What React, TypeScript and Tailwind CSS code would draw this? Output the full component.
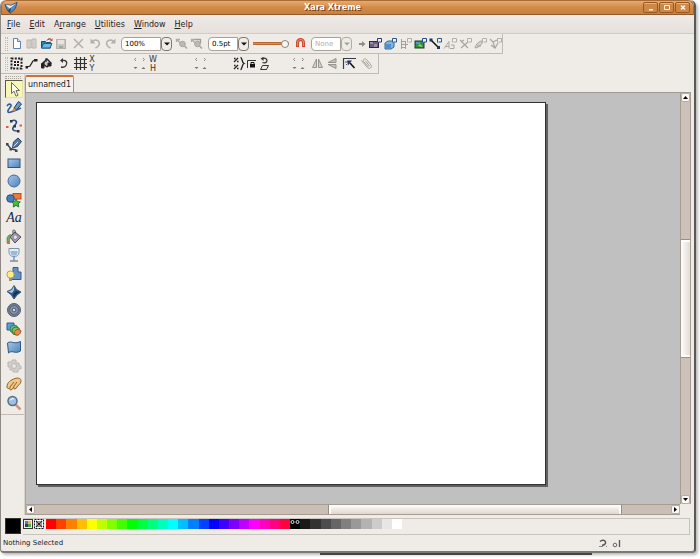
import { useState, type ReactNode } from 'react'
import clsx from 'clsx'

const menus = [
  { key: 'F', before: '', after: 'ile' },
  { key: 'E', before: '', after: 'dit' },
  { key: 'r', before: 'A', after: 'range' },
  { key: 'U', before: '', after: 'tilities' },
  { key: 'W', before: '', after: 'indow' },
  { key: 'H', before: '', after: 'elp' },
]

const swatches = [
  '#ff0000', '#ff4000', '#ff8000', '#ffbf00', '#ffff00', '#bfff00', '#80ff00', '#40ff00',
  '#00ff00', '#00ff40', '#00ff80', '#00ffbf', '#00ffff', '#00bfff', '#0080ff', '#0040ff',
  '#0000ff', '#4000ff', '#8000ff', '#bf00ff', '#ff00ff', '#ff00bf', '#ff0080', '#ff0040',
  '#000000', '#1a1a1a', '#333333', '#4d4d4d', '#666666', '#808080', '#999999', '#b3b3b3',
  '#cccccc', '#e6e6e6', '#ffffff',
]

function Svg({ children, className = 'size-[15px]', box = 15 }: { children: ReactNode; className?: string; box?: number }) {
  return (
    <svg viewBox={`0 0 ${box} ${box}`} className={clsx('shrink-0', className)} fill="none" aria-hidden="true">
      {children}
    </svg>
  )
}

function IconButton({ label, children, className = 'w-[15px]' }: { label: string; children: ReactNode; className?: string }) {
  return (
    <button type="button" aria-label={label} className={clsx('flex h-[15px] shrink-0 items-center justify-center', className)}>
      {children}
    </button>
  )
}

function Grip() {
  return <div className="ml-1 mr-px h-3.5 w-[3px] shrink-0 border-x border-dotted border-[#bdb7af]" />
}

interface ComboProps {
  label: string
  value: string
  width: string
  disabled?: boolean
}

function Combo({ label, value, width, disabled = false }: ComboProps) {
  const [text, setText] = useState(value)
  return (
    <div className={clsx('flex h-3.5 shrink-0', width)}>
      <input
        aria-label={label}
        value={text}
        disabled={disabled}
        onChange={(e) => setText(e.target.value)}
        className={clsx(
          'w-0 min-w-0 flex-1 rounded-l-sm border border-[#a8a199] bg-white px-[3px] text-[7px] leading-3 outline-none',
          disabled ? 'text-[#b5b0aa]' : 'text-black',
        )}
      />
      <button
        type="button"
        disabled={disabled}
        aria-label={`${label} options`}
        className={clsx(
          'flex w-[11px] items-center justify-center rounded-sm border bg-[#efebe6]',
          disabled ? 'border-[#b0aaa3]' : 'border-[#7d776f]',
        )}
      >
        <svg viewBox="0 0 6 4" className="h-1 w-1.5" aria-hidden="true">
          <path d="M0 0.5h6L3 3.5z" fill={disabled ? '#a7a19b' : '#111'} />
        </svg>
      </button>
    </div>
  )
}

// four small nudge arrows next to a numeric field
function Nudge() {
  return (
    <Svg>
      <path d="M4 2L2.500 3.500L4 5M11 2l1.500 1.500L11 5" stroke="#8d8882" />
      <path d="M1.500 11h4l-2 2zM9.500 13h4l-2-2z" fill="#77726c" />
    </Svg>
  )
}

function NewIcon() {
  return (
    <Svg>
      <path d="M4.5 2.5h4l3 3v7h-7z" fill="#fff" stroke="#5f83ab" />
      <path d="M8.5 2.5v3h3" stroke="#5f83ab" fill="#d8e6f5" />
    </Svg>
  )
}

function TemplateIcon() {
  return (
    <Svg>
      <path d="M3 4h4v8H3zM8 3h4v9H8z" fill="#dedad5" stroke="#b8b3ad" />
      <path d="M5 4v8M10 3v9" stroke="#c5c0ba" />
    </Svg>
  )
}

function OpenIcon() {
  return (
    <Svg>
      <path d="M2.5 12V5.5h4l1 1h4V12z" fill="#2f83b8" stroke="#17506f" />
      <path d="M2.5 12l2-4.500h8.500L11 12z" fill="#6db9e4" stroke="#1c5f88" />
      <path d="M8 4.500c1-2 3-2 4-1" stroke="#333" />
      <path d="M10.500 5.500L13.500 5V2z" fill="#e04a28" />
    </Svg>
  )
}

function SaveIcon() {
  return (
    <Svg>
      <rect x="2.500" y="3.500" width="9" height="9" fill="#c9c5c0" stroke="#b5b0aa" />
      <path d="M4 4h6v4H4z" fill="#e7e4e0" />
      <path d="M5 10h4v2H5z" fill="#aaa59f" />
    </Svg>
  )
}

function UndoIcon({ flip = false }: { flip?: boolean }) {
  return (
    <Svg className={clsx('size-[15px]', flip && '-scale-x-100')}>
      <path d="M4 6c3-4 9-1 7 3-.7 1.500-2 2.500-3.500 3" stroke="#b3afa9" strokeWidth="1.600" />
      <path d="M2.500 2.500v5h5z" fill="#b3afa9" />
    </Svg>
  )
}

function PinIcon({ variant = 0 }: { variant?: number }) {
  return (
    <Svg>
      <path d="M2.500 6V3.500H6M2.500 3.500l4 3.500" stroke="#b0aba5" strokeWidth="1.300" />
      <circle cx="8.500" cy="8" r="2.800" fill="#bdb8b2" stroke="#aaa59f" />
      <path d="M10.500 10l2.500 2.500" stroke="#aaa59f" strokeWidth="1.600" />
      {variant === 1 && <path d="M6 3.500h5.500V7" stroke="#a09b95" strokeWidth="1.300" />}
    </Svg>
  )
}

function MagnetIcon() {
  return (
    <Svg>
      <path d="M4.500 12V6.500a3 3 0 0 1 6 0V12" stroke="#c9492d" strokeWidth="3" />
      <path d="M4.500 10V6.500a3 3 0 0 1 6 0V10" stroke="#ec8369" strokeWidth="1.200" />
      <path d="M3 11h3v1.500H3zM9 11h3v1.500H9z" fill="#e9e5e0" />
    </Svg>
  )
}

// flag in the corner of every gallery button
function Flag({ color }: { color: string }) {
  return <path d="M9.500 6.500V2.500h4v3.500h-3" fill="#f3f1ee" stroke={color} />
}

const galleries: { label: string; color: string; art: ReactNode }[] = [
  { label: 'Bitmap gallery', color: '#2d3c66', art: <><rect x="1.500" y="5.500" width="9" height="6" fill="#66618a" stroke="#262b4d" /><path d="M2 6h3v2H2zM6 8h3v3H6z" fill="#a58da5" /></> },
  { label: 'Layer gallery', color: '#2b5688', art: <><path d="M2 7l3-2h6v6l-3 2H2z" fill="#7fb5e2" stroke="#34679e" /><path d="M3 8h5v4H3z" fill="#4f8fcb" /></> },
  { label: 'Line gallery', color: '#b2ada7', art: <path d="M3.500 3v10M7.500 5v8M3 5.500h5M3 8.500h7M3 11.500h5" stroke="#a39e98" /> },
  { label: 'Fill gallery', color: '#244a86', art: <><rect x="2" y="5" width="9" height="7" fill="#2e9147" stroke="#1b3f35" /><path d="M3 6h4v2H3z" fill="#5796d6" /><path d="M5 10l2-2 3 3z" fill="#a8d54f" /></> },
  { label: 'Name gallery', color: '#2b5688', art: <><path d="M3 4l7 7" stroke="#111" strokeWidth="1.500" /><path d="M1.500 2.500h3v3h-3zM9 10h3v3H9z" fill="#17396a" /></> },
  { label: 'Font gallery', color: '#b2ada7', art: <path d="M1 12.500l5-7v7M2.500 10.500H6M7 12.500h4V9H8" stroke="#aaa59f" /> },
  { label: 'Clipart gallery', color: '#b2ada7', art: <path d="M2 4l8 8M10 6l-7 6M3 6l3-2" stroke="#aaa59f" strokeWidth="1.200" /> },
  { label: 'Colour gallery', color: '#b2ada7', art: <path d="M2 12c1-4 4-7 7-7 1 3-2 6-7 7zM4 10h4" fill="#d2cec9" stroke="#aaa59f" /> },
  { label: 'Frame gallery', color: '#b2ada7', art: <path d="M2 3l3 3 4-2M5 6l2 6 3-5M3 9l4 3" stroke="#aaa59f" strokeWidth="1.200" /> },
]

const tools: { label: string; art: ReactNode }[] = [
  { label: 'Selector', art: <path d="M5.500 1.500v11l2.500-2.300 2 5 2-1-2-4.700h3.500z" fill="#fffef0" stroke="#6a6a63" /> },
  {
    label: 'Freehand',
    art: (
      <>
        <path d="M1 6c2-3 6-2 3 1.500s-3 6 1 4.500 6-2 10-4" stroke="#2f5d91" strokeWidth="1.600" />
        <path d="M8 8l4.500-6.500L15.500 4 10.500 10z" fill="#6d9bcd" stroke="#203b60" />
        <path d="M6.500 12L8 8l2.500 2z" fill="#e8a048" stroke="#7a5526" strokeWidth="0.500" />
      </>
    ),
  },
  {
    label: 'Shape editor',
    art: (
      <>
        <path d="M5 3c5-2 7 1 4 4s-4 6 3 6" stroke="#2c4f80" strokeWidth="1.600" />
        <path d="M4 2h2.500v2.500H4zM7.500 7H10v2.500H7.500zM11 12h2.500v2.500H11z" fill="#26364f" />
        <path d="M0 8h2.500v2H0zM13.500 6.500H16v2h-2.500z" fill="#df5c49" />
      </>
    ),
  },
  {
    label: 'Pen',
    art: (
      <>
        <path d="M1 7l4 5 5 1" stroke="#333d4c" strokeWidth="1.300" />
        <path d="M0 6h2.500v2.500H0zM3.500 11H6v2.500H3.500zM9 12.500h2.500V15H9z" fill="#37465b" />
        <path d="M6.500 11l1-6 4.500-4 3.500 3.500-4 5z" fill="#5779a2" stroke="#2d4362" />
        <path d="M7.500 9.500L12 5" stroke="#d4e2f1" />
      </>
    ),
  },
  { label: 'Rectangle', art: <rect x="2" y="4" width="12" height="8.500" fill="url(#toolBlue)" stroke="#30567f" /> },
  { label: 'Ellipse', art: <circle cx="8" cy="8" r="6" fill="url(#toolBlue)" stroke="#426b96" /> },
  {
    label: 'QuickShape',
    art: (
      <>
        <rect x="7" y="1.500" width="8" height="5.500" fill="#ee7a3c" stroke="#bb4d19" />
        <circle cx="4.500" cy="6.500" r="3.800" fill="#447db9" stroke="#224f80" />
        <path d="M10 7l1.300 2.600 3 .3-2.200 2 .7 3-2.800-1.500L7.200 15l.6-3.100-2.200-2 3-.3z" fill="#4dbd49" stroke="#25782c" />
      </>
    ),
  },
  { label: 'Text', art: null },
  {
    label: 'Fill',
    art: (
      <>
        <path d="M4 8l5-5 6 5-6 6z" fill="#a29bb1" stroke="#514b5e" />
        <path d="M7 8l2-2.500L12 8l-3 3z" fill="#e5e1eb" stroke="#6a6377" strokeWidth="0.600" />
        <path d="M7 5V1.500c1-1.500 3 0 2 3" stroke="#484852" />
        <path d="M1 9c1-3 3-4 5-3-3 2-2 5-3 8H1z" fill="#6fae59" stroke="#4c6d48" strokeWidth="0.600" />
        <path d="M1 12h3v3H1z" fill="#e6624b" />
      </>
    ),
  },
  {
    label: 'Transparency',
    art: (
      <>
        <path d="M3 1.500h10c.5 6-1 8-5 8s-5.500-2-5-8z" fill="#e4edf6" stroke="#7793b0" />
        <path d="M4.500 4h7c.3 3-1 4.500-3.500 4.500S4.200 7 4.500 4z" fill="#9bb9d6" />
        <path d="M8 9.500v4" stroke="#7793b0" strokeWidth="1.500" />
        <path d="M4 14h8" stroke="#7793b0" strokeWidth="1.600" />
      </>
    ),
  },
  {
    label: 'Shadow',
    art: (
      <>
        <path d="M7 1.500h5V6h3v7.500H5V6h2z" fill="#6592c1" stroke="#345d8a" />
        <circle cx="4.500" cy="8.500" r="3.600" fill="#ffec8e" stroke="#c79e36" />
        <path d="M3 12h3v3H3z" fill="#a79063" />
      </>
    ),
  },
  {
    label: 'Bevel',
    art: (
      <>
        <path d="M8 1.500l2.500 4L15 8l-4 3-3 4-3-4.500L1 7.500l4.500-2z" fill="#325d8b" stroke="#3b5573" />
        <path d="M8 2v4L6 9 2 7.500l4-1.500z" fill="#a9ccec" />
        <path d="M8 14l-1-4 3-3 4 1-4 2.500z" fill="#173354" />
      </>
    ),
  },
  {
    label: 'Contour',
    art: (
      <>
        <circle cx="8" cy="8" r="6.500" fill="#6d7c90" stroke="#57606d" />
        <circle cx="8" cy="8" r="4.300" fill="#8798ae" stroke="#56657b" />
        <circle cx="8" cy="8" r="1.900" fill="#cedaea" stroke="#46566c" />
      </>
    ),
  },
  {
    label: 'Blend',
    art: (
      <>
        <path d="M1 2h7v7H1z" fill="#5a9dd6" stroke="#275e95" />
        <circle cx="8" cy="8" r="4" fill="#5cb99c" stroke="#2f7d64" />
        <circle cx="10" cy="10" r="4" fill="#80c253" stroke="#3e7d25" />
        <path d="M8 12c1-4 5-5 7-2-1 4-4 6-7 2z" fill="#e98750" stroke="#a64b23" />
      </>
    ),
  },
  {
    label: 'Mould',
    art: <path d="M1.500 4c4-3 6 2 13-1.500v9.500C9 15.500 6 10.500 2.500 14z" fill="url(#toolBlue)" stroke="#2d5785" />,
  },
  {
    label: 'Live effects',
    art: (
      <>
        <path d="M2 4h4v-2h4v3h3v3h2v3h-3v3H7v-2H4V9H2z" fill="#d2cfcb" stroke="#bbb7b2" />
        <circle cx="8" cy="8" r="2.500" fill="#e5e2df" stroke="#bbb7b2" />
      </>
    ),
  },
  {
    label: 'Push',
    art: (
      <>
        <path d="M1 11c0-5 4-7 8-8.500 3-1 6 0 6 2s-1 4-3 5l-2 3c-2 1-3 0-2-2l-2 3c-2 1-3 0-2-2l-1 1c-1 0-2 0-2-1.500z" fill="#edc88a" stroke="#906327" />
        <path d="M4 11l4-5M8 10l3-4" stroke="#906327" />
      </>
    ),
  },
  {
    label: 'Zoom',
    art: (
      <>
        <path d="M9.500 9.500l5 5" stroke="#cf9581" strokeWidth="2.500" />
        <circle cx="6.500" cy="6" r="4.500" fill="#9dbfe2" stroke="#576d87" strokeWidth="1.500" />
        <path d="M4 5.500c1-2 3-2 4-1.500" stroke="#fff" />
      </>
    ),
  },
]

function TitleBar() {
  const control = 'flex h-[11px] w-[15px] items-center justify-center rounded-xs border border-[#98581f] bg-[#cf8747] shadow-[inset_0_1px_0_#e6b27e]'
  return (
    <header className="flex h-[15px] shrink-0 items-center rounded-t-md border border-[#a96c35] border-b-[#945a2a] bg-linear-to-b from-[#e6ab70] via-[#d28a49] to-[#c8803f] px-0.5">
      <Svg className="size-3.5" box={16}>
        <path d="M1 4l7 1 7-3.500-2 7L7 14l-3-3z" fill="#5b8cbb" stroke="#284d75" />
        <path d="M1.500 4l5 4.500L14 2.500 8 5.500z" fill="#e7f2fc" />
        <path d="M4.500 10.500L8 8l-1 5z" fill="#1f3e61" />
      </Svg>
      <h1 className="flex-1 pl-1 text-center text-[8px] leading-3 font-bold text-white [text-shadow:1px_1px_0_#754017]">Xara Xtreme</h1>
      <div className="mr-px flex gap-px">
        <button type="button" aria-label="Minimise" className={control}>
          <svg viewBox="0 0 8 7" className="h-[7px] w-2"><path d="M2 5h4v1.500H2z" fill="#fff3e2" /></svg>
        </button>
        <button type="button" aria-label="Maximise" className={control}>
          <svg viewBox="0 0 8 7" className="h-[7px] w-2"><path d="M1.500 1.500h5v4h-5z" fill="none" stroke="#fff3e2" /></svg>
        </button>
        <button type="button" aria-label="Close" className={control}>
          <svg viewBox="0 0 8 7" className="h-[7px] w-2"><path d="M2 1.500l4 4M6 1.500l-4 4" stroke="#fff3e2" strokeWidth="1.500" /></svg>
        </button>
      </div>
    </header>
  )
}

function MainToolbar() {
  const [quality, setQuality] = useState(100)
  return (
    <div className="flex h-5 w-[502px] items-center border-r border-b border-[#c1bbb3]">
      <Grip />
      <IconButton label="New"><NewIcon /></IconButton>
      <IconButton label="Templates"><TemplateIcon /></IconButton>
      <IconButton label="Open"><OpenIcon /></IconButton>
      <IconButton label="Save"><SaveIcon /></IconButton>
      <IconButton label="Delete" className="mx-0.5 w-[15px]">
        <Svg><path d="M3 3l9 9M12 3l-9 9" stroke="#b3afa9" strokeWidth="1.500" /></Svg>
      </IconButton>
      <IconButton label="Undo"><UndoIcon /></IconButton>
      <IconButton label="Redo" className="mr-[3px] w-[15px]"><UndoIcon flip /></IconButton>
      <Combo label="Zoom" value="100%" width="w-[51px]" />
      <IconButton label="Previous zoom" className="ml-0.5 w-[15px]"><PinIcon /></IconButton>
      <IconButton label="Zoom to drawing" className="mr-1 w-[15px]"><PinIcon variant={1} /></IconButton>
      <Combo label="Line width" value="0.5pt" width="w-[41px]" />
      <input
        aria-label="Quality"
        type="range"
        value={quality}
        onChange={(e) => setQuality(Number(e.target.value))}
        className="ml-1 h-[3px] w-9 shrink-0 appearance-none border-y border-[#b8692f] bg-[#e38a4c] [&::-webkit-slider-thumb]:size-2 [&::-webkit-slider-thumb]:appearance-none [&::-webkit-slider-thumb]:rounded-full [&::-webkit-slider-thumb]:border [&::-webkit-slider-thumb]:border-[#8d857d] [&::-webkit-slider-thumb]:bg-[#f8f6f3]"
      />
      <IconButton label="Snap to objects" className="mr-[3px] ml-1 w-[15px]"><MagnetIcon /></IconButton>
      <Combo label="Feather" value="None" width="w-[41px]" disabled />
      <IconButton label="Show galleries" className="ml-1 w-3">
        <svg viewBox="0 0 8 8" className="size-2"><path d="M1 3h3V1l3.500 3L4 7V5H1z" fill="#918c86" /></svg>
      </IconButton>
      <div className="flex w-[132px]">
        {galleries.map((g) => (
          <IconButton key={g.label} label={g.label} className="flex-1">
            <Svg>
              {g.art}
              <Flag color={g.color} />
            </Svg>
          </IconButton>
        ))}
      </div>
    </div>
  )
}

function FieldPair({ top, bottom }: { top: string; bottom: string }) {
  return (
    <div className="flex w-2 shrink-0 flex-col items-center text-[8px] leading-[9px] text-[#333]">
      <span>{top}</span>
      <span>{bottom}</span>
    </div>
  )
}

function InfoBar() {
  return (
    <div className="flex h-5 w-[378px] items-center border-r border-b border-[#c1bbb3]">
      <Grip />
      <IconButton label="Show bounds">
        <Svg>
          <rect x="2.500" y="2.500" width="10" height="10" stroke="#222" strokeWidth="2" strokeDasharray="2 1.300" />
          <path d="M5 5h2v2H5zM8 5h2v2H8zM5 8h2v2H5zM8 8h2v2H8z" fill="#222" />
        </Svg>
      </IconButton>
      <IconButton label="Scale line widths">
        <Svg>
          <path d="M3 11l3-1 3-5 3-1" stroke="#222" strokeWidth="1.300" />
          <path d="M1.500 10H4v2.500H1.500zM10 3h3.500v2.500H10z" fill="#222" />
        </Svg>
      </IconButton>
      <IconButton label="Transform fills">
        <Svg>
          <path d="M5 6l3-3 4 4-4 4-4-3z" fill="#c9c5c0" stroke="#222" strokeWidth="1.300" />
          <path d="M2.500 7.500L5 6v6H2.500zM7 2v4M9 7h3v3H9z" fill="#222" stroke="#222" />
        </Svg>
      </IconButton>
      <IconButton label="Rotate mode" className="mx-0.5 w-[15px]">
        <Svg>
          <path d="M6 4.500c4-1 6 2 4 5-1 2-3 2-5 1.500" stroke="#333" strokeWidth="1.300" />
          <path d="M4 4.500L7 2v5z" fill="#333" />
        </Svg>
      </IconButton>
      <IconButton label="Grid origin">
        <Svg><path d="M3.500 1v13M7.500 1v13M11.500 1v13M1 3.500h13M1 7.500h13M1 11.500h13" stroke="#333" strokeWidth="1.200" /></Svg>
      </IconButton>
      <FieldPair top="X" bottom="Y" />
      <div className="mr-0.5 ml-9"><Nudge /></div>
      <FieldPair top="W" bottom="H" />
      <div className="mr-6 ml-9"><Nudge /></div>
      <IconButton label="Lock aspect ratio">
        <Svg>
          <path d="M2 6l4-4M2 13l4-4M2 2.500h1.500M5 5.500h1.500M2 9.500h1.500M5 12.500h1.500" stroke="#222" strokeWidth="1.300" />
          <path d="M8.500 1.500c2 0 1 5 3.500 6-2.500 1-1.500 6-3.500 6" stroke="#222" strokeWidth="1.300" />
        </Svg>
      </IconButton>
      <IconButton label="Lock" className="w-2.5">
        <Svg className="size-3" box={12}>
          <path d="M1.500 10V2.500H10" stroke="#333" />
          <path d="M4 6h5v3.500H4z" fill="#111" />
          <path d="M5 6V4.500h3V6" stroke="#111" />
        </Svg>
      </IconButton>
      <IconButton label="Angle and shear">
        <Svg>
          <path d="M5 2.500c4-1 6 1 4.500 3.500-1 1-2.500 1-4 .5" stroke="#333" strokeWidth="1.300" />
          <path d="M3.500 2.500L6.500 1v4z" fill="#333" />
          <path d="M5.500 9.500h6l-2 4h-6z" stroke="#333" />
        </Svg>
      </IconButton>
      <div className="mr-1 ml-[19px]"><Nudge /></div>
      <IconButton label="Flip horizontally">
        <Svg><path d="M6.500 3v8.500h-4zM8.500 3v8.500h4z" fill="#d3cfca" stroke="#99948e" /></Svg>
      </IconButton>
      <IconButton label="Flip vertically">
        <Svg><path d="M11 2.500v4H3zM11 12.500v-4H3z" fill="#c5c0ba" stroke="#99948e" /></Svg>
      </IconButton>
      <IconButton label="Edit group contents" className="mx-0.5 w-[15px]">
        <Svg>
          <path d="M1.500 13V2.500H14" stroke="#333b4a" strokeWidth="1.200" />
          <path d="M8 7l4.500 5" stroke="#111" strokeWidth="1.600" />
          <path d="M5 4.500h5L6 9.500z" fill="#26355b" />
          <path d="M3 6h2M4 9l1-1" stroke="#44506a" />
        </Svg>
      </IconButton>
      <IconButton label="Clip">
        <Svg>
          <path d="M2.500 4.500l6 7c2 2 5 0 3.500-2.500L7.500 3.500c-1.500-1.500-4 0-3 2l5 5.500M6.500 5l4 5" stroke="#a5a09a" />
        </Svg>
      </IconButton>
    </div>
  )
}

function Toolbox() {
  const [active, setActive] = useState('Selector')
  return (
    <aside className="w-6 shrink-0 border-r border-[#d6d1ca]">
      <div className="border-b border-[#c1bbb3] pt-0.5 pb-0.5 pl-1">
        <div className="h-[3px] w-4 border-y border-dotted border-[#a9a39b]" />
        <div className="mt-px flex h-[332px] w-[18px] flex-col">
          {tools.map((tool) => (
            <button
              key={tool.label}
              type="button"
              aria-label={tool.label}
              aria-pressed={active === tool.label}
              onClick={() => setActive(tool.label)}
              className={clsx(
                'flex w-full flex-1 items-center justify-center border',
                active === tool.label
                  ? 'border-[#e4e0a8] border-t-[#5e5c48] border-l-[#5e5c48] bg-[#f8f6b4]'
                  : 'border-transparent',
              )}
            >
              {tool.art ? (
                <Svg className="size-4" box={16}>{tool.art}</Svg>
              ) : (
                <span className="font-['Liberation_Serif',serif] text-[14px] leading-4 text-[#16263d] italic">Aa</span>
              )}
            </button>
          ))}
        </div>
      </div>
    </aside>
  )
}

function ScrollButton({ label, path }: { label: string; path: string }) {
  return (
    <button
      type="button"
      aria-label={label}
      className="flex size-[9px] shrink-0 items-center justify-center rounded-xs border border-[#b5aca3] bg-[#faf8f6]"
    >
      <svg viewBox="0 0 5 5" className="size-[5px]"><path d={path} fill="#000" /></svg>
    </button>
  )
}

function Workspace() {
  return (
    <main className="grid min-h-0 flex-1 grid-cols-[1fr_11px] grid-rows-[1fr_11px] border-t border-l border-[#aaa59f] border-t-[#9d9994]">
      <div className="min-h-0 overflow-hidden bg-[#c0c0c0] pt-[9px] pl-2.5">
        <div className="h-[383px] w-[510px] border border-[#333] bg-white shadow-[2px_2px_0_#606060]" />
      </div>

      <div className="flex flex-col items-center border-x border-[#a79c92] bg-[#cdc2b9]">
        <ScrollButton label="Scroll up" path="M0 4h5L2.500 1z" />
        <div className="flex-[138]" />
        <div className="w-full flex-[118] border-y border-[#998f86] bg-linear-to-r from-white via-[#f0ece8] to-[#e3dcd5] shadow-[inset_0_2px_0_#fff,inset_0_-2px_0_#fff]" />
        <div className="flex-[138]" />
        <ScrollButton label="Scroll down" path="M0 1h5L2.500 4z" />
      </div>

      <div className="flex items-center border-y border-[#a79c92] bg-[#cabfb4]">
        <ScrollButton label="Scroll left" path="M4 0v5L1 2.500z" />
        <div className="flex-[294]" />
        <div className="h-full flex-[294] border-x border-[#998f86] bg-linear-to-b from-white via-[#eee9e3] to-[#dfd7cf] shadow-[inset_2px_0_0_#fff,inset_-2px_0_0_#fff]" />
        <div className="flex-[49]" />
        <ScrollButton label="Scroll right" path="M1 0v5l3-2.500z" />
      </div>
      <div className="bg-[#efebe7]" />
    </main>
  )
}

function ColourLine() {
  return (
    <div className="flex h-5 shrink-0 pt-[3px] pr-1">
      <div className="ml-1 size-4 shrink-0 border border-[#333] bg-black" />
      <div className="ml-0.5 flex flex-1 border-t border-r border-b border-[#c8c3bc]">
        <button type="button" aria-label="Edit colour" className="h-2.5 w-2.5">
          <Svg className="size-2.5" box={10}>
            <rect x="0.500" y="0.500" width="9" height="9" fill="#eee" stroke="#333" />
            <path d="M2 2h3v3H2z" fill="#3f83ce" />
            <path d="M5 2h3v3H5z" fill="#e3bd47" />
            <path d="M2 5h3v3H2z" fill="#2b3c60" />
            <path d="M5 5h3v3H5z" fill="#51a953" />
          </Svg>
        </button>
        <button type="button" aria-label="No colour" className="mr-0.5 ml-px h-2.5 w-2.5">
          <Svg className="size-2.5" box={10}>
            <rect x="0.500" y="0.500" width="9" height="9" fill="#fff" stroke="#111" strokeDasharray="2 1" />
            <path d="M2 2l6 6M8 2L2 8" stroke="#222" strokeWidth="1.200" />
            <circle cx="5" cy="5" r="2.500" stroke="#555" strokeWidth="0.800" />
          </Svg>
        </button>
        <div className="flex h-2.5 w-[356px]">
          {swatches.map((color) => (
            <button
              key={color}
              type="button"
              aria-label={color}
              className="flex flex-1 justify-center"
              style={{ backgroundColor: color }}
            >
              {/* line and fill marker of the current colour */}
              {color === '#000000' && (
                <svg viewBox="0 0 10 6" className="h-1.5 w-2.5" fill="none">
                  <circle cx="2.500" cy="3" r="1.500" stroke="#dde8e4" />
                  <circle cx="7.500" cy="3" r="1.500" stroke="#dde8e4" />
                </svg>
              )}
            </button>
          ))}
        </div>
      </div>
    </div>
  )
}

function StatusBar() {
  return (
    <footer className="flex h-4 shrink-0 items-center pr-[72px] pl-0.5 text-[7px] leading-3 text-[#222]">
      <span className="flex-1">Nothing Selected</span>
      <svg viewBox="0 0 24 9" className="h-[9px] w-6" fill="none" aria-hidden="true">
        <path d="M2 2.500c2-2 5-1.500 5.500.5S6 6 4 6.500" stroke="#555" strokeWidth="1.500" />
        <path d="M1 7.500h4M8 7.500h1" stroke="#888" />
        <circle cx="17" cy="6" r="1.800" stroke="#666" />
        <path d="M21.500 1v7" stroke="#555" strokeWidth="1.300" />
      </svg>
    </footer>
  )
}

export default function App() {
  return (
    <div className="flex h-screen flex-col bg-white pr-1 pb-1 font-['DejaVu_Sans',sans-serif]">
      <svg className="absolute size-0" aria-hidden="true">
        <defs>
          <linearGradient id="toolBlue" x1="0" y1="0" x2="1" y2="1">
            <stop offset="0" stopColor="#a6c8eb" />
            <stop offset="1" stopColor="#4d82bb" />
          </linearGradient>
        </defs>
      </svg>
      <div className="flex min-h-0 flex-1 flex-col rounded-t-md rounded-b-sm border-r-2 border-b-2 border-l border-[#5c5955] border-b-[#7d7a76] border-l-[#8d8882] bg-[#efebe7] shadow-[2px_2px_3px_#bbb]">
        <TitleBar />

        <nav className="flex h-[19px] shrink-0 items-center gap-[9px] border-b border-[#d3cbc4] bg-linear-to-b from-[#f0ebe7] to-[#e6dfda] pt-0.5 pl-1.5 text-[8px] leading-3 text-[#222]">
          {menus.map((menu) => (
            <button key={menu.key} type="button">
              {menu.before}
              <span className="underline">{menu.key}</span>
              {menu.after}
            </button>
          ))}
        </nav>

        <MainToolbar />
        <InfoBar />

        <div className="mr-[3px] flex min-h-0 flex-1">
          <Toolbox />
          <div className="flex min-w-0 flex-1 flex-col">
            <div className="flex h-[18px] shrink-0 pt-px" role="tablist">
              <button
                type="button"
                role="tab"
                aria-selected="true"
                className="rounded-t-xs border-x border-t-2 border-[#9b948d] border-t-[#c9713a] bg-[#f5f2ee] px-0.5 text-[8px] leading-3 text-[#222]"
              >
                unnamed1
              </button>
            </div>
            <Workspace />
          </div>
        </div>

        <ColourLine />
        <StatusBar />
      </div>
      {/* edge of the panel behind the window */}
      <div className="ml-[46%] h-0.5 w-[39%] shrink-0 bg-[#444]" />
    </div>
  )
}
